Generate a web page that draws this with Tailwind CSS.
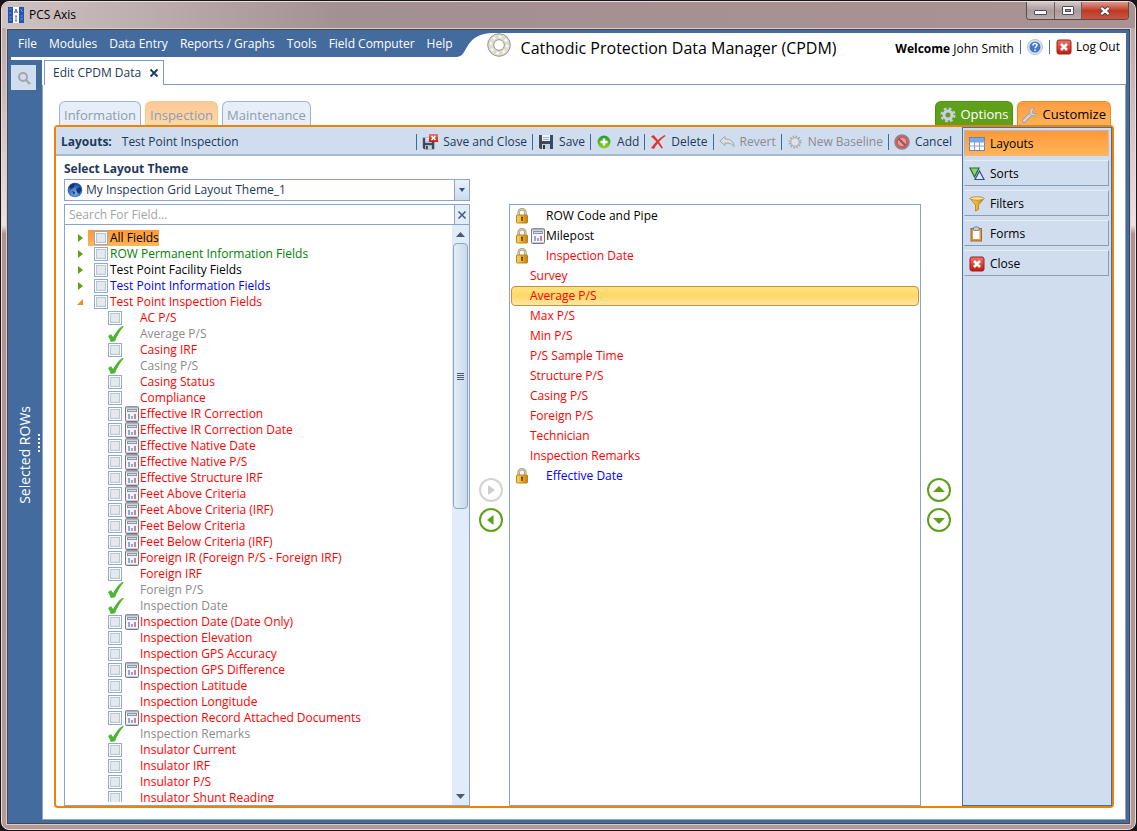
<!DOCTYPE html>
<html lang="en">
<head>
    <meta charset="UTF-8">
    <meta name="viewport" content="width=device-width, initial-scale=1.0">
    <title>PCS Axis</title>
    <script src="https://cdn.jsdelivr.net/npm/@tailwindcss/browser@4"></script>
    <style>
        body {
            font-family: 'Open Sans', 'Noto Sans', sans-serif;
        }
    </style>
</head>
<body class="bg-[#1a1416] text-xs text-[#1e395b]">
    <!-- Shared icons -->
    <svg class="absolute h-0 w-0">
        <defs>
            <linearGradient id="gold" x1="0" y1="0" x2="1" y2="0">
                <stop offset="0" stop-color="#f7d46a"/><stop offset=".5" stop-color="#eeb12c"/><stop offset="1" stop-color="#c07f10"/>
            </linearGradient>
            <linearGradient id="red" x1="0" y1="0" x2="0" y2="1">
                <stop offset="0" stop-color="#e8796a"/><stop offset="1" stop-color="#c01a10"/>
            </linearGradient>
            <linearGradient id="green" x1="0" y1="0" x2="0" y2="1">
                <stop offset="0" stop-color="#1f9a3c"/><stop offset="1" stop-color="#8fd41c"/>
            </linearGradient>
            <radialGradient id="blueBall" cx=".5" cy=".7" r=".6">
                <stop offset="0" stop-color="#7fb4ef"/><stop offset="1" stop-color="#1b4da0"/>
            </radialGradient>
            <symbol id="i-lock" viewBox="0 0 14 16">
                <path d="M3.6 8V4.6a3.4 3.4 0 0 1 6.8 0V8" fill="none" stroke="#a8987a" stroke-width="2.4"/>
                <path d="M3.6 8V4.6a3.4 3.4 0 0 1 6.8 0V8" fill="none" stroke="#e9dfc4" stroke-width=".8"/>
                <rect x="1.5" y="7" width="11" height="8" rx=".8" fill="url(#gold)" stroke="#b9851f"/>
                <path d="M7 9v4M6 9.5h2" stroke="#5c3d08" stroke-width="1.4"/>
            </symbol>
            <symbol id="i-calc" viewBox="0 0 14 16">
                <rect x=".5" y=".5" width="13" height="15" rx="1" fill="#f4f5f8" stroke="#77777f"/>
                <path d="M1 1.5h12" stroke="#b0b0b8" stroke-width="2"/>
                <rect x="2.5" y="3.5" width="9" height="2" fill="#cfe2f5" stroke="#8796ad"/>
                <path d="M4 8v5M7 10v3" stroke="#97a5dc" stroke-width="2"/>
                <path d="M10 8v5" stroke="#d87f86" stroke-width="2"/>
                <path d="M1 14.500h12" stroke="#c9cbd4"/>
            </symbol>
            <symbol id="i-check" viewBox="0 0 16 16">
                <path d="M0 10 3 8.300 5.200 11C7.500 6.300 10.500 2.500 14.500 0H16C12.500 4 9.500 9 7 15.200L2.800 16C2.200 13.800 1.200 12 0 10Z" fill="#4db535"/>
            </symbol>
            <symbol id="i-close" viewBox="0 0 16 16">
                <rect x="1" y="1" width="14" height="14" rx="2" fill="url(#red)" stroke="#a31c14"/>
                <path d="M5 5l6 6M11 5l-6 6" stroke="#fff" stroke-width="2.600"/>
            </symbol>
            <symbol id="i-floppy" viewBox="0 0 16 16">
                <path d="M1 1h14v14H2.500L1 13.500Z" fill="#3c4a60"/>
                <rect x="4" y="1" width="8" height="6" fill="#eef3f9"/>
                <path d="M5 3.500h6M5 5.500h6" stroke="#9fb0c4"/>
                <rect x="4" y="10" width="8" height="5" fill="#c8d2de"/>
                <rect x="5" y="11" width="2" height="4" fill="#2b3648"/>
            </symbol>
        </defs>
    </svg>

    <!-- Window frame -->
    <div class="h-screen p-px">
        <div class="flex h-full flex-col rounded-lg border border-[#e9dfdf] bg-[linear-gradient(#b9a3a3,#c8b8b8_10%,#ebe2e2_27%,#b0928f_28%,#b39a97)] px-1 pb-1">
            <!-- Title bar -->
            <div class="-mx-1 flex h-[26px] shrink-0 items-start rounded-t-lg bg-linear-to-r from-[#cfc3c3] via-[#a39092] via-30% to-[#a99293] pl-1.5 pr-1.5">
                <svg class="mt-[5px] h-4 w-4" viewBox="0 0 16 16">
                    <rect width="16" height="16" fill="#2457b5"/>
                    <rect x="5" width="6" height="16" fill="#fff"/>
                    <path d="M1.500 2h2M1.500 6h2M1.500 10h2M1.500 13h2M12.500 2l2 3M12.500 9h2M12.500 12h2" stroke="#7ea0dc"/>
                    <path d="M6.500 6 8 2l1.500 4M7 5h2M8 9v5M7 9h2M7 14h2" fill="none" stroke="#4c5f86" stroke-width=".9"/>
                </svg>
                <h1 class="mt-[5px] ml-[5px] text-black">PCS Axis</h1>
                <div class="ml-auto flex h-[18px] overflow-hidden rounded-b border border-t-0 border-[#5a4a4c]">
                    <button class="flex w-7 items-center justify-center border-r border-[#6e5c5e] bg-linear-to-b from-[#d3c8c9] via-[#ab9b9d] to-[#b9a9ab]" aria-label="Minimize">
                        <svg class="mt-1 h-[5px] w-[13px]" viewBox="0 0 13 5"><rect x=".5" y=".5" width="12" height="4" rx=".5" fill="#fff" stroke="#4b4b58"/></svg>
                    </button>
                    <button class="flex w-[27px] items-center justify-center border-r border-[#6e5c5e] bg-linear-to-b from-[#d3c8c9] via-[#ab9b9d] to-[#b9a9ab]" aria-label="Maximize">
                        <svg class="h-[9px] w-3" viewBox="0 0 12 9"><rect x=".5" y=".5" width="11" height="8" rx=".5" fill="#fff" stroke="#4b4b58"/><rect x="3.500" y="3.500" width="5" height="2" fill="#b0a0a2" stroke="#4b4b58"/></svg>
                    </button>
                    <button class="flex w-[46px] items-center justify-center bg-linear-to-b from-[#dc9a8d] via-[#bf3a22] to-[#c8553f]" aria-label="Close window">
                        <svg class="h-[10px] w-3" viewBox="0 0 12 10"><path d="M2 1.500l8 7M10 1.500l-8 7" stroke="#4b3b48" stroke-width="4"/><path d="M2.300 1.800l7.400 6.400M9.700 1.800l-7.400 6.400" stroke="#fff" stroke-width="2.400"/></svg>
                    </button>
                </div>
            </div>

            <!-- Client area -->
            <div class="flex min-h-0 flex-1 flex-col border border-[#d9cdcc]">
                <div class="flex min-h-0 flex-1 flex-col border border-[#4a4650] bg-[#436b9e] pr-[3px] pb-[3px]">
                    <!-- Header -->
                    <header class="flex h-[27px] shrink-0">
                        <nav class="flex items-center gap-3 pl-2.5 text-white">
                            <a href="#">File</a>
                            <a href="#">Modules</a>
                            <a href="#">Data Entry</a>
                            <a href="#">Reports / Graphs</a>
                            <a href="#">Tools</a>
                            <a href="#">Field Computer</a>
                            <a href="#">Help</a>
                        </nav>
                        <div class="mt-[3px] ml-1 flex min-w-0 flex-1">
                            <svg class="h-6 w-9 shrink-0" viewBox="0 0 36 24"><path d="M0 24C6 23 7 19 10 14C15 5 23 0 36 0V24Z" fill="#fff"/></svg>
                            <div class="flex flex-1 items-center bg-white">
                                <svg class="-ml-1.5 h-6 w-6 shrink-0" viewBox="0 0 24 24">
                                    <circle cx="12" cy="12" r="8.300" fill="none" stroke="#dcdccf" stroke-width="6"/>
                                    <circle cx="12" cy="12" r="11.300" fill="none" stroke="#98988c"/>
                                    <circle cx="12" cy="12" r="5.300" fill="none" stroke="#98988c"/>
                                    <circle cx="12" cy="12" r="8.300" fill="none" stroke="#fff" stroke-width="2.400" stroke-dasharray="2.400 4.118"/>
                                </svg>
                                <h2 class="mt-1.5 ml-2.5 text-base whitespace-nowrap text-black">Cathodic Protection Data Manager (CPDM)</h2>
                                <div class="mt-1 ml-auto flex items-center pr-1.5 whitespace-nowrap text-black">
                                    <span class="mt-1"><b>Welcome</b> John Smith</span>
                                    <span class="mx-1.5 h-3.5 w-px bg-[#436b9e]"></span>
                                    <button aria-label="Help">
                                        <svg class="h-4 w-4" viewBox="0 0 16 16">
                                            <circle cx="8" cy="8" r="7.500" fill="#dfe3ea" stroke="#b9bec8"/>
                                            <circle cx="8" cy="8" r="5.500" fill="#3f78d0"/>
                                            <path d="M6 6.500C6 4 10 4 10 6.300C10 7.800 8 7.700 8 9.300M8 10.400v1.500" fill="none" stroke="#fff" stroke-width="1.500"/>
                                        </svg>
                                    </button>
                                    <span class="mx-1.5 h-3.5 w-px bg-[#436b9e]"></span>
                                    <button class="flex items-center gap-1"><svg class="h-4 w-4"><use href="#i-close"/></svg>Log Out</button>
                                </div>
                            </div>
                        </div>
                    </header>

                    <div class="flex min-h-0 flex-1">
                        <!-- Collapsed side panel -->
                        <aside class="flex w-[34px] shrink-0 flex-col">
                            <div class="ml-[3px] h-[3px] shrink-0 bg-white"></div>
                            <button class="mt-[5px] ml-[3px] flex h-[25px] w-[25px] items-center justify-center bg-[#d0ddee]" aria-label="Search">
                                <svg class="h-3.5 w-3.5" viewBox="0 0 14 14"><circle cx="6" cy="6" r="4" fill="none" stroke="#a3a5a8" stroke-width="2"/><path d="M9 9l4 4" stroke="#a3a5a8" stroke-width="2.400"/></svg>
                            </button>
                            <div class="flex flex-1 items-center justify-end">
                                <span class="rotate-180 text-sm leading-5 text-white [writing-mode:vertical-rl]">Selected ROWs</span>
                                <svg class="-mt-6 mr-0.5 ml-[3px] h-[18px] w-0.5" viewBox="0 0 2 18"><path d="M1 0v18" stroke="#fff" stroke-width="2" stroke-dasharray="2 2"/></svg>
                            </div>
                        </aside>

                        <main class="flex min-w-0 flex-1 flex-col bg-white pt-[3px]">
                            <!-- Document tab -->
                            <div class="flex shrink-0">
                                <div class="ml-0.5 flex h-[25px] items-center gap-2 border border-b-0 border-[#7f9ac0] pr-1 pl-2">Edit CPDM Data
                                    <button aria-label="Close tab"><svg class="h-2.5 w-2.5" viewBox="0 0 10 10"><path d="M1.500 1.500l7 7M8.500 1.500l-7 7" stroke="#1e395b" stroke-width="1.800"/></svg></button>
                                </div>
                                <div class="flex-1 border-b border-[#7f9ac0]"></div>
                            </div>

                            <div class="flex min-h-0 flex-1 flex-col border-r border-b border-l border-[#8ba4c8] px-[11px] pt-4 pb-[11px]">
                                <!-- Section tabs -->
                                <div class="flex h-6 shrink-0 gap-1 px-[5px] text-[13px] font-medium text-[#8d9cb0]">
                                    <button class="rounded-t-md border border-b-0 border-[#9fb4d0] bg-[#e7eef8] px-1 pt-1">Information</button>
                                    <button class="rounded-t-md border border-b-0 border-[#f8c98f] bg-linear-to-b from-[#fdc899] to-[#fdd9a5] px-1 pt-1">Inspection</button>
                                    <button class="rounded-t-md border border-b-0 border-[#9fb4d0] bg-[#e7eef8] px-1 pt-1">Maintenance</button>
                                    <button class="ml-auto flex items-center gap-1 rounded-t-md border border-b-0 border-[#4f9110] bg-[#5fa01b] px-1 pt-0.5 text-white">
                                        <svg class="h-4 w-4" viewBox="0 0 16 16"><circle cx="8" cy="8" r="6.300" fill="none" stroke="#c3cbe0" stroke-width="2.600" stroke-dasharray="2.600 2.348"/><circle cx="8" cy="8" r="4" fill="none" stroke="#c9d0e2" stroke-width="3"/></svg>Options
                                    </button>
                                    <button class="-mr-0.5 flex items-center gap-1 rounded-t-md border border-b-0 border-[#ee8a1c] bg-linear-to-b from-[#ff9c42] to-[#ffb257] px-1 pt-0.5 text-black">
                                        <svg class="h-4 w-4" viewBox="0 0 16 16"><path d="M2 13.800 9 7" stroke="#8f939b" stroke-width="4" stroke-linecap="round"/><path d="M2 13.800 9 7" stroke="#d0d3d8" stroke-width="2.600" stroke-linecap="round"/><path d="M13 1.200A4 4 0 1 0 15 6.500L12 7 10 5.500 11 3Z" fill="#d0d3d8" stroke="#8f939b" stroke-width=".7"/></svg>Customize
                                    </button>
                                </div>

                                <section class="flex min-h-0 flex-1 rounded border-2 border-[#ee8208]">
                                    <div class="flex min-w-0 flex-1 flex-col">
                                        <!-- Toolbar -->
                                        <div class="flex h-[29px] shrink-0 items-center border-b-2 border-[#a3b8d4] bg-[#d0ddee] pt-0.5 pr-2.5 pl-[5px] whitespace-nowrap">
                                            <b>Layouts:</b><span class="ml-2.5">Test Point Inspection</span>
                                            <div id="toolbar" class="ml-auto flex items-center gap-[5px]">
                                                <span class="h-4 w-px bg-[#3d699f]"></span>
                                                <button class="flex items-center gap-[5px]">
                                                    <svg class="h-4 w-4" viewBox="0 0 16 16"><g transform="translate(0 3) scale(.82)"><use href="#i-floppy" width="16" height="16"/></g><rect x="7" y="0" width="9" height="8" fill="url(#red)"/><path d="M9.500 2l4 4M13.500 2l-4 4" stroke="#fff" stroke-width="1.600"/></svg>Save and Close
                                                </button>
                                                <span class="h-4 w-px bg-[#3d699f]"></span>
                                                <button class="flex items-center gap-[5px]"><svg class="h-4 w-4"><use href="#i-floppy"/></svg>Save</button>
                                                <span class="h-4 w-px bg-[#3d699f]"></span>
                                                <button class="flex items-center gap-[5px]">
                                                    <svg class="h-4 w-4" viewBox="0 0 16 16"><circle cx="8" cy="8" r="6.500" fill="url(#green)"/><path d="M8 4.500v7M4.500 8h7" stroke="#fff" stroke-width="2.600"/></svg>Add
                                                </button>
                                                <span class="h-4 w-px bg-[#3d699f]"></span>
                                                <button class="flex items-center gap-[5px]">
                                                    <svg class="h-4 w-4" viewBox="0 0 16 16"><path d="M1 2.500 3.500 1C7 4.500 10 8.500 13 14L11.500 14.500C8 9.500 5 5.500 1 2.500Z" fill="#dc3a28"/><path d="M14.500 1 15.500 2C10 6 6.500 10 4 15L1 14C5 8.500 9.500 4 14.500 1Z" fill="#dc3a28"/></svg>Delete
                                                </button>
                                                <span class="h-4 w-px bg-[#3d699f]"></span>
                                                <button class="flex items-center gap-[5px] text-[#8b8b8b]" disabled>
                                                    <svg class="h-4 w-4" viewBox="0 0 16 16"><path d="M.8 7 6 2.500V5C11.500 5 15 7.500 15 12.500C13 9.500 10.500 9 6 9V11.500Z" fill="#dcdfe3" stroke="#a0a4aa"/></svg>Revert
                                                </button>
                                                <span class="h-4 w-px bg-[#3d699f]"></span>
                                                <button class="flex items-center gap-[5px] text-[#8b8b8b]" disabled>
                                                    <svg class="h-4 w-4" viewBox="0 0 16 16"><circle cx="8" cy="8" r="5.600" fill="none" stroke="#a3a7ad" stroke-width="2" stroke-dasharray="1.400 1.532"/><circle cx="8" cy="8" r="4.200" fill="#e0e3e8" stroke="#a3a7ad"/></svg>New Baseline
                                                </button>
                                                <span class="h-4 w-px bg-[#3d699f]"></span>
                                                <button class="flex items-center gap-[5px]">
                                                    <svg class="h-4 w-4" viewBox="0 0 16 16"><circle cx="8" cy="8" r="6.500" fill="#ee9a9c" stroke="#8d8489" stroke-width="2.600"/><circle cx="8" cy="8" r="5" fill="none" stroke="#e05258" stroke-width="1.800"/><path d="M4.500 4.500l7 7" stroke="#8d5a60" stroke-width="2.200"/></svg>Cancel
                                                </button>
                                            </div>
                                        </div>

                                        <div class="flex min-h-0 flex-1 pl-2">
                                            <!-- Available fields -->
                                            <div class="flex w-[406px] shrink-0 flex-col">
                                                <label for="theme" class="pt-[5px] pb-[3px] leading-[15px] font-bold">Select Layout Theme</label>
                                                <div class="relative h-[22px] shrink-0">
                                                    <select id="theme" class="h-full w-full appearance-none border border-[#8ba4c8] bg-white pl-[21px] text-xs leading-5">
                                                        <option>My Inspection Grid Layout Theme_1</option>
                                                    </select>
                                                    <svg class="pointer-events-none absolute top-[3px] left-[3px] h-4 w-4" viewBox="0 0 16 16"><circle cx="8" cy="8" r="7.300" fill="url(#blueBall)"/><path d="M2 5C4 2 7 1.500 8 2.500L6.500 5.500 4 7ZM9 7l4-2 1.500 3-2.500 4-2-2ZM5 9l3 1-1 3Z" fill="#123473"/></svg>
                                                    <span class="pointer-events-none absolute inset-y-0 right-0 flex w-4 items-center justify-center border border-[#8ba4c8] bg-linear-to-b from-[#eaf2fb] to-[#c9dbee]">
                                                        <svg class="h-1 w-1.5" viewBox="0 0 6 4"><path d="M0 0h6L3 4Z" fill="#3e4f75"/></svg>
                                                    </span>
                                                </div>
                                                <div class="mt-[3px] flex h-[21px] shrink-0 border border-[#8ba4c8]">
                                                    <input type="text" placeholder="Search For Field..." aria-label="Search For Field" class="min-w-0 flex-1 px-1 text-xs placeholder:text-[#a3a3a3]">
                                                    <button class="flex w-[15px] items-center justify-center border-l border-[#8ba4c8] bg-[#e3edf9]" aria-label="Clear"><svg class="h-2.5 w-2.5" viewBox="0 0 10 10"><path d="M1.500 1.500l7 7M8.500 1.500l-7 7" stroke="#4c5a7a" stroke-width="1.600"/></svg></button>
                                                </div>
                                                <div class="flex min-h-0 flex-1 border border-t-0 border-[#8ba4c8] pl-2">
                                                    <ul id="fieldTree" class="mt-[5px] mb-[3px] flex-1 overflow-hidden leading-4"></ul>
                                                    <!-- Scrollbar -->
                                                    <div class="flex w-[17px] flex-col items-center bg-[#e1ecfa] pt-[7px] pb-1.5">
                                                        <svg class="h-[5px] w-[9px]" viewBox="0 0 9 5"><path d="M0 5h9L4.500 0Z" fill="#4c5a7a"/></svg>
                                                        <div class="mt-1.5 flex h-[266px] w-[15px] items-center justify-center rounded-sm border border-[#8ba4c8] bg-linear-to-r from-[#e4eef8] to-[#c8daec]">
                                                            <svg class="h-[7px] w-[7px]" viewBox="0 0 7 7"><path d="M0 .5h7M0 2.500h7M0 4.500h7M0 6.500h7" stroke="#4c5a7a"/></svg>
                                                        </div>
                                                        <svg class="mt-auto h-[5px] w-[9px]" viewBox="0 0 9 5"><path d="M0 0h9L4.500 5Z" fill="#4c5a7a"/></svg>
                                                    </div>
                                                </div>
                                            </div>

                                            <!-- Move in / out -->
                                            <div class="flex w-[39px] shrink-0 flex-col items-center justify-center gap-1.5 pt-12 pl-[3px]">
                                                <button class="flex h-6 w-6 items-center justify-center rounded-full border-2 border-[#d3d3d3]" aria-label="Add field" disabled><svg class="h-3 w-3" viewBox="0 0 12 12"><path d="M3 1v10L10 6Z" fill="#cfcfcf"/></svg></button>
                                                <button class="flex h-6 w-6 items-center justify-center rounded-full border-2 border-[#5fa01b]" aria-label="Remove field"><svg class="h-3 w-3" viewBox="0 0 12 12"><path d="M8.500 1v10L2 6Z" fill="#5fa01b"/></svg></button>
                                            </div>

                                            <!-- Selected fields -->
                                            <ul id="selectedFields" class="mt-12 min-w-0 flex-1 border border-[#8ba4c8] p-px leading-[18px]"></ul>

                                            <!-- Reorder -->
                                            <div class="flex w-[41px] shrink-0 flex-col items-center justify-center gap-1.5 pt-12 pr-1.5">
                                                <button class="flex h-6 w-6 items-center justify-center rounded-full border-2 border-[#5fa01b]" aria-label="Move up"><svg class="h-3 w-3" viewBox="0 0 12 12"><path d="M0 8h12L6 2Z" fill="#5fa01b"/></svg></button>
                                                <button class="flex h-6 w-6 items-center justify-center rounded-full border-2 border-[#5fa01b]" aria-label="Move down"><svg class="h-3 w-3" viewBox="0 0 12 12"><path d="M0 4h12L6 10Z" fill="#5fa01b"/></svg></button>
                                            </div>
                                        </div>
                                    </div>

                                    <!-- Customize menu -->
                                    <div class="flex w-[150px] shrink-0 flex-col gap-1 border border-[#4570a5] bg-[#d0ddee] py-0.5 pr-0.5 pl-px text-black">
                                        <button class="flex h-[26px] items-center gap-[5px] border border-[#a9b7cb] border-r-[#f3b878] border-b-[#f3b878] bg-linear-to-b from-[#ff9838] to-[#ffb558] px-1 pt-0.5">
                                            <svg class="h-4 w-4" viewBox="0 0 16 16"><rect x=".5" y="1.500" width="15" height="13" fill="#fff" stroke="#6a82b8"/><rect x="1" y="2" width="14" height="4" fill="#6db0ea"/><path d="M0 6h16M0 10h16M5.500 2v12M10.500 2v12" stroke="#8aa0cc"/></svg>Layouts
                                        </button>
                                        <button class="flex h-[26px] items-center gap-[5px] border border-t-[#e6eef8] border-r-[#8d9cb0] border-b-[#8d9cb0] border-l-[#d0ddee] px-1 pt-0.5">
                                            <svg class="h-4 w-4" viewBox="0 0 16 16"><path d="M1 2h9L5.500 11Z" fill="#8fd07a" stroke="#2c6a2a" stroke-width="1.200"/><path d="M6 13.500h9L10.500 5Z" fill="#dce8fa" stroke="#2f4f8f" stroke-width="1.200"/></svg>Sorts
                                        </button>
                                        <button class="flex h-[26px] items-center gap-[5px] border border-t-[#e6eef8] border-r-[#8d9cb0] border-b-[#8d9cb0] border-l-[#d0ddee] px-1 pt-0.5">
                                            <svg class="h-4 w-4" viewBox="0 0 16 16"><path d="M1 2.500 6.500 9v6l3-1.500V9L15 2.500Z" fill="url(#gold)" stroke="#b9801c" stroke-width=".8"/><ellipse cx="8" cy="2.500" rx="7" ry="1.700" fill="#f8e2a8" stroke="#b9801c" stroke-width=".8"/></svg>Filters
                                        </button>
                                        <button class="flex h-[26px] items-center gap-[5px] border border-t-[#e6eef8] border-r-[#8d9cb0] border-b-[#8d9cb0] border-l-[#d0ddee] px-1 pt-0.5">
                                            <svg class="h-4 w-4" viewBox="0 0 16 16"><rect x="2" y="2.500" width="10.500" height="12.500" fill="#d99a4a" stroke="#a8692a"/><rect x="4" y="4.500" width="6.500" height="8.500" fill="#fff"/><rect x="4.500" y="1" width="5.500" height="3.500" rx="1" fill="#c3cfdf" stroke="#5f7290" stroke-width=".8"/></svg>Forms
                                        </button>
                                        <button class="flex h-[26px] items-center gap-[5px] border border-t-[#e6eef8] border-r-[#8d9cb0] border-b-[#8d9cb0] border-l-[#d0ddee] px-1 pt-0.5">
                                            <svg class="h-4 w-4"><use href="#i-close"/></svg>Close
                                        </button>
                                    </div>
                                </section>
                            </div>
                        </main>
                    </div>
                </div>
            </div>
        </div>
    </div>

    <script>
        const groups = [
            { name: 'All Fields', color: 'text-black', active: true },
            { name: 'ROW Permanent Information Fields', color: 'text-[#008000]' },
            { name: 'Test Point Facility Fields', color: 'text-black' },
            { name: 'Test Point Information Fields', color: 'text-[#0000ff]' },
            { name: 'Test Point Inspection Fields', color: 'text-[#f00]', open: true }
        ];

        // c = calculated field, x = already in the layout
        const fields = [
            ['AC P/S'], ['Average P/S', 'x'], ['Casing IRF'], ['Casing P/S', 'x'], ['Casing Status'], ['Compliance'],
            ['Effective IR Correction', 'c'], ['Effective IR Correction Date', 'c'], ['Effective Native Date', 'c'],
            ['Effective Native P/S', 'c'], ['Effective Structure IRF', 'c'], ['Feet Above Criteria', 'c'],
            ['Feet Above Criteria (IRF)', 'c'], ['Feet Below Criteria', 'c'], ['Feet Below Criteria (IRF)', 'c'],
            ['Foreign IR (Foreign P/S - Foreign IRF)', 'c'], ['Foreign IRF'], ['Foreign P/S', 'x'],
            ['Inspection Date', 'x'], ['Inspection Date (Date Only)', 'c'], ['Inspection Elevation'],
            ['Inspection GPS Accuracy'], ['Inspection GPS Difference', 'c'], ['Inspection Latitude'],
            ['Inspection Longitude'], ['Inspection Record Attached Documents', 'c'], ['Inspection Remarks', 'x'],
            ['Insulator Current'], ['Insulator IRF'], ['Insulator P/S'], ['Insulator Shunt Reading']
        ];

        const selected = [
            { name: 'ROW Code and Pipe', color: 'text-black', lock: true },
            { name: 'Milepost', color: 'text-black', lock: true, calc: true },
            { name: 'Inspection Date', color: 'text-[#f00]', lock: true },
            { name: 'Survey' },
            { name: 'Average P/S', active: true },
            { name: 'Max P/S' },
            { name: 'Min P/S' },
            { name: 'P/S Sample Time' },
            { name: 'Structure P/S' },
            { name: 'Casing P/S' },
            { name: 'Foreign P/S' },
            { name: 'Technician' },
            { name: 'Inspection Remarks' },
            { name: 'Effective Date', color: 'text-[#0000ff]', lock: true }
        ];

        const box = 'h-3.5 w-3.5 shrink-0 appearance-none border border-[#8fa9cf] bg-[#e6e8ea] shadow-[inset_0_0_0_1px_#fff,inset_0_0_0_2px_#b3c5dd]';

        function renderTree() {
            let html = '';
            groups.forEach(g => {
                const arrow = g.open ? '<path d="M0 7h6V1Z" fill="#f08a24"/>' : '<path d="M1 0v8L6 4Z" fill="#5fa01b"/>';
                const hl = g.active ? 'bg-linear-to-b from-[#ff9838] to-[#ffb558]' : '';
                html += `<li class="flex h-4 items-center pl-1">
                    <svg class="h-2 w-1.5 shrink-0" viewBox="0 0 6 8">${arrow}</svg>
                    <label class="ml-[5px] flex items-center gap-0.5 pl-1.5 whitespace-nowrap ${g.color} ${hl}"><input type="checkbox" class="${box}">${g.name}</label>
                </li>`;
            });
            fields.forEach(([name, flag]) => {
                const mark = flag === 'x'
                    ? '<span class="relative h-4 w-4"><input type="checkbox" checked class="absolute inset-0 opacity-0"><svg class="h-4 w-4"><use href="#i-check"/></svg></span>'
                    : `<span class="flex w-4"><input type="checkbox" class="${box}"></span>`;
                const calc = flag === 'c' ? '<svg class="h-4 w-3.5"><use href="#i-calc"/></svg>' : '';
                html += `<li><label class="flex h-4 items-center pl-[35px] whitespace-nowrap ${flag === 'x' ? 'text-[#8b8b8b]' : 'text-[#f00]'}">
                    ${mark}<span class="flex w-4 shrink-0 pl-px">${calc}</span>${name}</label></li>`;
            });
            document.getElementById('fieldTree').innerHTML = html;
        }

        function renderSelected() {
            document.getElementById('selectedFields').innerHTML = selected.map(f => {
                const icons = f.lock
                    ? `<svg class="h-4 w-3.5"><use href="#i-lock"/></svg><span class="flex w-[17px] justify-center">${f.calc ? '<svg class="h-4 w-3.5"><use href="#i-calc"/></svg>' : ''}</span>`
                    : '<span class="w-[15px]"></span>';
                const look = f.active ? 'rounded-sm border-[#c2933c] bg-linear-to-b from-[#ffe182] via-[#ffd866] to-[#fbe6a6]' : 'border-transparent';
                return `<li class="flex h-5 items-center border pl-[3px] whitespace-nowrap ${f.color || 'text-[#f00]'} ${look}">${icons}${f.name}</li>`;
            }).join('');
        }

        renderTree();
        renderSelected();
    </script>
</body>
</html>
